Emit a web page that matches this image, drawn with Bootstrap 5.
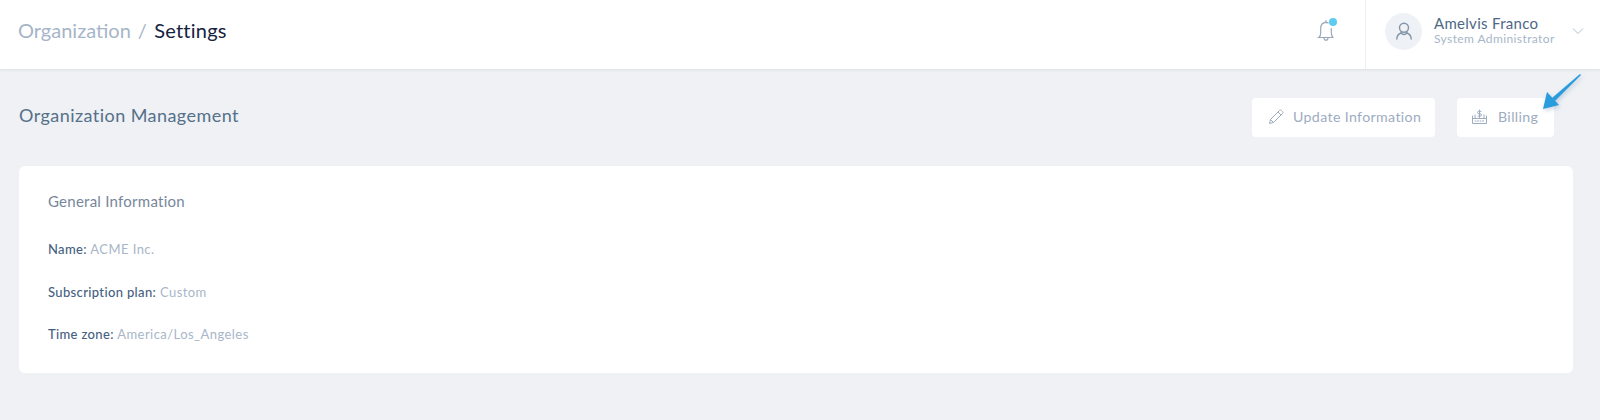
<!DOCTYPE html>
<html lang="en">
<head>
  <meta charset="UTF-8" />
  <meta name="viewport" content="width=device-width, initial-scale=1.0"/>
  <title>Organization Settings</title>
  <link href="https://cdn.jsdelivr.net/npm/bootstrap@5.3.3/dist/css/bootstrap.min.css" rel="stylesheet" />
  <style>
    body {
      font-family: "Lato", "Liberation Sans", sans-serif;
      background-color: #eff1f5;
      height: 420px;
      overflow: hidden;
      position: relative;
    }
    .top-bar {
      height: 69px;
      background-color: #fff;
      box-shadow: 0 1px 3px rgba(60, 70, 90, 0.1);
    }
    .crumbs {
      margin: 0 0 9px 18px;
      font-size: 20px;
    }
    .crumbs .breadcrumb-item { color: #15233f; letter-spacing: 0.25px; }
    .crumbs .breadcrumb-item a { color: #a6b5c8; text-decoration: none; letter-spacing: 0; }
    .crumbs .breadcrumb-item + .breadcrumb-item { padding-left: 7px; }
    .crumbs .breadcrumb-item + .breadcrumb-item::before { color: #a6b5c8; padding-right: 7px; }
    .bell-box { width: 27px; margin-right: 22px; margin-bottom: 7px; position: relative; }
    .bell-dot {
      position: absolute;
      top: -1px;
      right: 6px;
      width: 8px;
      height: 8px;
      border-radius: 50%;
      background-color: #5fcbee;
    }
    .user-box {
      width: 235px;
      height: 69px;
      border-left: 1px solid #eceef2;
      padding: 0 0 7px 19px;
    }
    .avatar {
      width: 37px;
      height: 37px;
      border-radius: 50%;
      background-color: #eef1f5;
    }
    .user-name { font-size: 15px; line-height: 16px; color: #4d6885; letter-spacing: 0.3px; margin-top: -1px; }
    .user-role { font-size: 12px; line-height: 15px; color: #a8b6c8; letter-spacing: 0.4px; }
    .page-body { padding: 29px 27px 0 19px; }
    .head-row { padding-right: 19px; }
    .page-title { font-size: 18px; font-weight: 400; color: #557089; margin: 0 0 3px; letter-spacing: 0.45px; }
    .soft-btn {
      height: 39px;
      padding-top: 0;
      padding-bottom: 2px;
      background-color: #fff;
      border: 0;
      border-radius: 4px;
      color: #9dacbf;
      font-size: 14.2px;
      letter-spacing: 0.35px;
      display: flex;
      align-items: center;
    }
    .btn-update { width: 183px; padding-left: 16px; padding-right: 0; margin-right: 22px; gap: 9px; }
    .btn-billing { width: 97px; padding-left: 15px; padding-right: 0; gap: 11px; }
    .info-card {
      margin-top: 29px;
      height: 207px;
      border: 0;
      border-radius: 6px;
      padding: 25px 29px;
    }
    .info-title { font-size: 15px; font-weight: 400; color: #76879a; margin: 0 0 30px; line-height: 20px; letter-spacing: 0.25px; }
    .info-line { font-size: 13px; line-height: 16px; margin: 0 0 26.5px; color: #a8b6c8; letter-spacing: 0.45px; }
    .info-line strong { font-weight: 500; color: #46617f; letter-spacing: 0.35px; }
    .callout { position: absolute; left: 1535px; top: 66px; filter: drop-shadow(1px 2px 2px rgba(40, 90, 130, 0.25)); }
  </style>
</head>
<body>
  <!-- Top bar -->
  <header class="top-bar d-flex align-items-center justify-content-between">
    <nav aria-label="breadcrumb">
      <ol class="breadcrumb crumbs">
        <li class="breadcrumb-item"><a href="#">Organization</a></li>
        <li class="breadcrumb-item active crumb-now" aria-current="page">Settings</li>
      </ol>
    </nav>
    <div class="d-flex align-items-center">
      <div class="bell-box">
        <svg class="d-block" width="20" height="24" viewBox="0 0 20 24" fill="none" stroke="#98a8bb" stroke-width="1.2" stroke-linecap="round" stroke-linejoin="round">
          <path d="M3 18.500c1.200-1.200 1.700-2.600 1.700-5V9.500C4.700 6 6.800 3.600 10 3.400c.8 0 1.500.1 2.200.5"/>
          <path d="M15.300 9.500v4c0 2.400.5 3.800 1.700 5H2"/>
          <path d="M8 18.700c0 1.600.9 2.500 2 2.500s2-.9 2-2.500"/>
          <path d="M10 1.500v1.800"/>
        </svg>
        <span class="bell-dot"></span>
      </div>
      <div class="user-box d-flex align-items-center">
        <div class="avatar d-flex align-items-center justify-content-center me-2">
          <svg width="20" height="20" viewBox="0 0 20 20" fill="none" stroke="#8495a9" stroke-width="1.400" stroke-linecap="round">
            <circle cx="10" cy="6.800" r="4.500"/>
            <path d="M7.300 10.800l-.2 1.200C4.600 12.800 3 14.600 2.800 18"/>
            <path d="M12.700 10.800l.2 1.200c2.500.8 4.100 2.600 4.300 6"/>
            <path d="M7.100 12c1.500 2 4.300 2 5.800 0"/>
          </svg>
        </div>
        <div class="ms-1 flex-grow-1">
          <div class="user-name">Amelvis Franco</div>
          <div class="user-role">System Administrator</div>
        </div>
        <svg class="me-3" width="12" height="8" viewBox="0 0 12 8" fill="none" stroke="#b4c0cf" stroke-width="1">
          <path d="M1 1.500l5 5 5-5"/>
        </svg>
      </div>
    </div>
  </header>

  <main class="page-body">
    <div class="head-row d-flex align-items-center justify-content-between">
      <h1 class="page-title">Organization Management</h1>
      <div class="d-flex">
        <button type="button" class="btn soft-btn btn-update">
          <svg width="16" height="16" viewBox="0 0 16 16" fill="none" stroke="#9dacbf" stroke-width="1" stroke-linejoin="round">
            <path d="M1.500 14.500l1-4L11.500 1.500a1.400 1.400 0 0 1 2 0l1 1a1.400 1.400 0 0 1 0 2l-9 9z"/>
            <path d="M2.500 10.500l3 3M10 3l3 3"/>
          </svg>
          Update Information
        </button>
        <button type="button" class="btn soft-btn btn-billing">
          <svg width="15" height="15" viewBox="0 0 15 15" fill="none" stroke="#9dacbf" stroke-width="1" stroke-linecap="round" stroke-linejoin="round">
            <path d="M.5 7v7.500h14V7"/>
            <path d="M.5 9.500h14"/>
            <path d="M3 6v3.500M12 6v3.500"/>
            <path d="M3 12h9" stroke-dasharray="1 1.500"/>
            <path d="M9 2.300H6.800a1.100 1.100 0 0 0 0 2.400h1.400a1.100 1.100 0 0 1 0 2.400H6M7.500 1v7.500"/>
          </svg>
          Billing
        </button>
      </div>
    </div>

    <div class="card info-card">
      <h2 class="info-title">General Information</h2>
      <p class="info-line"><strong>Name:</strong> ACME Inc.</p>
      <p class="info-line"><strong>Subscription plan:</strong> Custom</p>
      <p class="info-line"><strong>Time zone:</strong> America/Los_Angeles</p>
    </div>
  </main>

  <!-- annotation arrow -->
  <svg class="callout" width="50" height="50" viewBox="0 0 50 50">
    <path d="M45 8L46 9 20 35 17 32z" fill="#2a9bdc"/>
    <path d="M8 43L12 26 24 39z" fill="#2a9bdc"/>
  </svg>

  <script src="https://cdn.jsdelivr.net/npm/bootstrap@5.3.3/dist/js/bootstrap.bundle.min.js"></script>
</body>
</html>
